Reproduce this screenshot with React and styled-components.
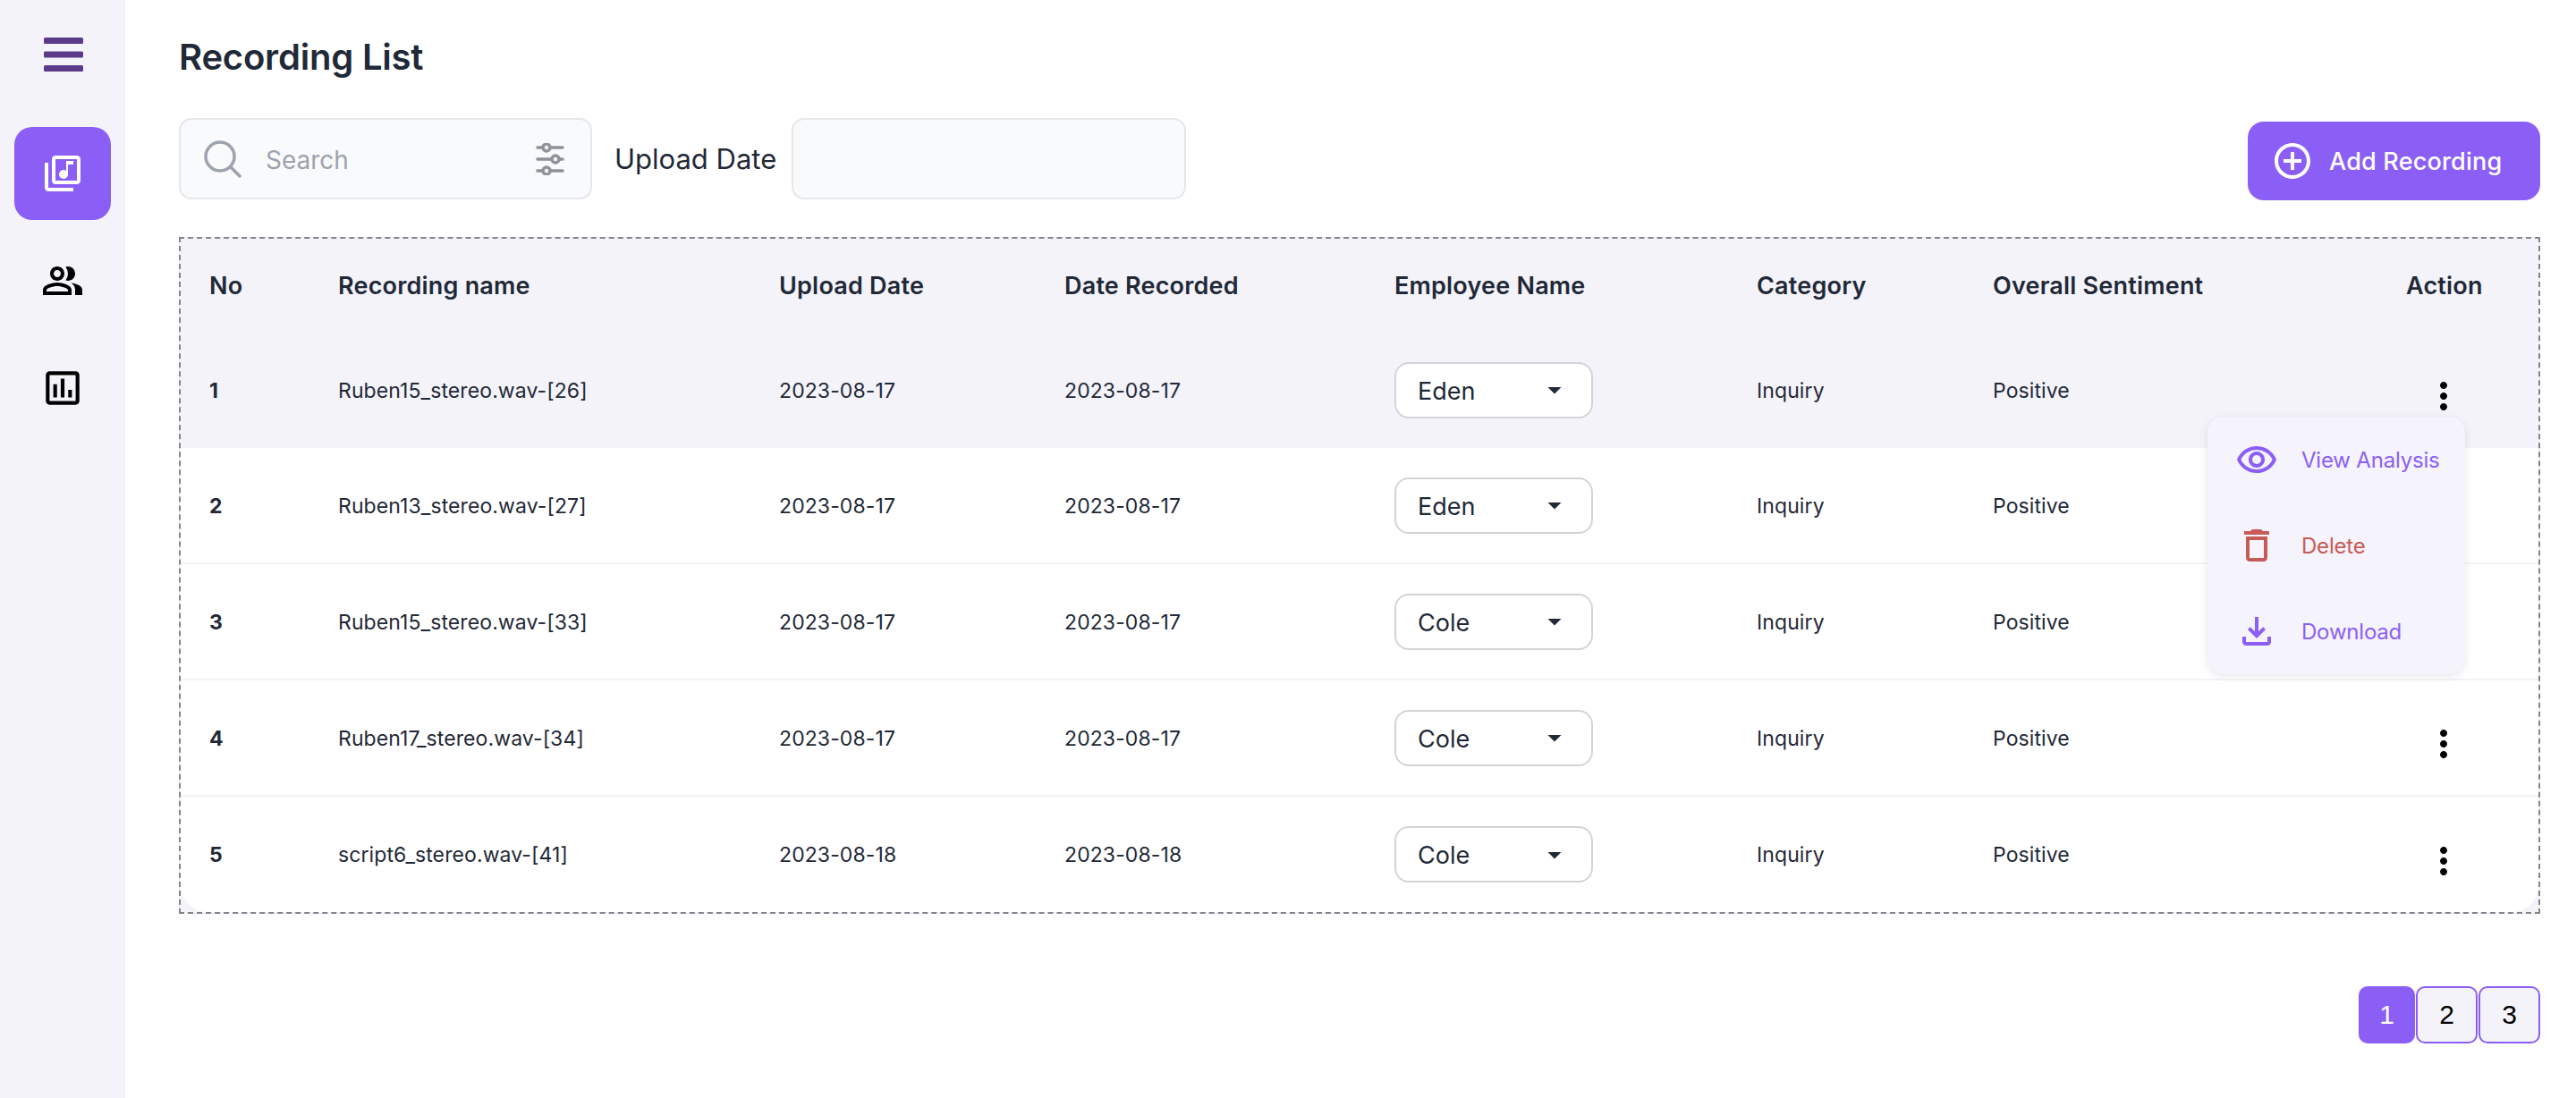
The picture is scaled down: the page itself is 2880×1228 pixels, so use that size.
import React from "react";
import styled, { createGlobalStyle } from "styled-components";
import {
  MdOutlineLibraryMusic,
  MdOutlinePeopleAlt,
  MdOutlineAssessment,
  MdOutlineAddCircleOutline,
  MdMoreVert,
  MdArrowDropDown,
  MdOutlineRemoveRedEye,
  MdOutlineDelete,
  MdOutlineFileDownload,
} from "react-icons/md";

const GlobalStyle = createGlobalStyle`
  body {
    margin: 0;
    background: #fff;
    font-family: Inter, "Liberation Sans", sans-serif;
    color: #1f2937;
  }
`;

const Shell = styled.div`
  display: flex;
  height: 100vh;
  overflow: hidden;
`;

const Sidebar = styled.aside`
  width: 140px;
  flex: none;
  background: #f4f3fa;
  display: flex;
  flex-direction: column;
  align-items: center;
  padding-top: 42px;
  box-sizing: border-box;
`;

const MenuIcon = styled.svg`
  display: block;
  width: 44px;
  height: 38px;
  margin: 0 0 62px 2px;
`;

const NavItem = styled.div`
  width: 108px;
  height: 104px;
  border-radius: 20px;
  display: flex;
  align-items: center;
  justify-content: center;
  margin-bottom: 16px;
  font-size: ${(p) => p.$size || "48px"};
  background: ${(p) => (p.$active ? "#8b5ff6" : "transparent")};
  color: ${(p) => (p.$active ? "#fff" : "#000")};
`;

const Main = styled.main`
  flex: 1;
  min-width: 0;
  padding: 40px 40px 0 60px;
`;

const Title = styled.h1`
  margin: 0;
  font-size: 40px;
  line-height: 48px;
  font-weight: 600;
  letter-spacing: -0.2px;
  color: #1f2937;
`;

const Toolbar = styled.div`
  display: flex;
  align-items: center;
  margin-top: 44px;
  height: 91px;
`;

const SearchBox = styled.div`
  width: 462px;
  height: 91px;
  box-sizing: border-box;
  border: 2px solid #e5e7eb;
  border-radius: 14px;
  background: #f9fafb;
  display: flex;
  align-items: center;
  padding: 0 29px 0 26px;
`;

const SearchInput = styled.input`
  flex: 1;
  min-width: 0;
  margin-left: 27px;
  padding: 2px 0 0;
  border: 0;
  outline: 0;
  background: transparent;
  font: 400 28px Inter, sans-serif;
  color: #1f2937;
  &::placeholder {
    color: #9ca3af;
  }
`;

const DateLabel = styled.label`
  margin: 0 17px 0 25px;
  font-size: 31px;
  color: #1f2937;
`;

const DateInput = styled.input`
  width: 441px;
  height: 91px;
  box-sizing: border-box;
  border: 2px solid #e5e7eb;
  border-radius: 14px;
  background: #f9fafb;
  outline: 0;
`;

const AddButton = styled.button`
  margin: 5px 0 0 auto;
  width: 327px;
  height: 88px;
  border: 0;
  border-radius: 18px;
  background: #8b5ff6;
  color: #fff;
  display: flex;
  align-items: center;
  gap: 17px;
  padding: 0 0 0 26px;
  font: 500 27px Inter, sans-serif;
  letter-spacing: 0.2px;
  svg {
    font-size: 48px;
    flex: none;
  }
`;

const TableBox = styled.div`
  margin-top: 42px;
  border: 2px dashed #85828a;
  background: #f4f3fa;
`;

const Row = styled.div`
  display: grid;
  grid-template-columns: 144px 493px 319px 369px 405px 264px 462px 84px;
  padding-left: 32px;
  align-items: center;
  box-sizing: border-box;
  height: ${(p) => (p.$head ? "104px" : p.$last ? "129px" : "130px")};
  background: ${(p) => (p.$head || p.$tinted ? "#f4f3fa" : "#fff")};
  border-bottom: ${(p) => (p.$head || p.$tinted || p.$last ? "0" : "2px solid #f3f3f5")};
  border-radius: ${(p) => (p.$last ? "0 0 30px 30px" : "0")};
`;

const HeadCell = styled.div`
  font-size: 27px;
  font-weight: 600;
  letter-spacing: 0.2px;
  white-space: nowrap;
  color: #1f2937;
  text-align: ${(p) => (p.$center ? "center" : "left")};
`;

const Cell = styled.div`
  font-size: 23px;
  letter-spacing: 0.1px;
  padding-top: 1px;
  white-space: nowrap;
  color: #1f2937;
`;

const NumCell = styled(Cell)`
  font-weight: 700;
`;

const Select = styled.div`
  width: 222px;
  height: 63px;
  box-sizing: border-box;
  border: 2px solid #d4d4d8;
  border-radius: 16px;
  background: #fff;
  display: flex;
  align-items: center;
  justify-content: space-between;
  padding: 2px 23px 0 24px;
  font-size: 27px;
  color: #1f2937;
  svg {
    font-size: 36px;
    margin-top: -2px;
  }
`;

const ActionCell = styled.div`
  position: relative;
  display: flex;
  justify-content: center;
  padding-top: 14px;
  font-size: 48px;
  color: #000;
`;

const Popup = styled.div`
  position: absolute;
  z-index: 2;
  top: 61px;
  right: 18px;
  width: 288px;
  height: 288px;
  box-sizing: border-box;
  border-radius: 18px;
  background: #f5f3fb;
  box-shadow: 0 2px 8px rgba(60, 50, 90, 0.12);
  display: flex;
  flex-direction: column;
  justify-content: center;
`;

const PopupItem = styled.div`
  height: 96px;
  display: grid;
  grid-template-columns: 105px 1fr;
  align-items: center;
  font-size: 24px;
  letter-spacing: -0.2px;
  color: ${(p) => p.$color};
  svg {
    font-size: 48px;
    justify-self: center;
    margin-left: 5px;
  }
`;

const Pagination = styled.div`
  display: flex;
  justify-content: flex-end;
  gap: 1px;
  margin-top: 81px;
`;

const PageButton = styled.button`
  width: ${(p) => (p.$active ? "63px" : "69px")};
  height: 64px;
  box-sizing: border-box;
  padding: 0;
  border-radius: 10px;
  border: ${(p) => (p.$active ? "0" : "2px solid #8b5ff6")};
  background: ${(p) => (p.$active ? "#8b5ff6" : "#f4f3fa")};
  color: ${(p) => (p.$active ? "#fff" : "#000")};
  font: 400 30px "Liberation Sans", Arial, sans-serif;
`;

const rows = [
  { no: 1, name: "Ruben15_stereo.wav-[26]", date: "2023-08-17", emp: "Eden" },
  { no: 2, name: "Ruben13_stereo.wav-[27]", date: "2023-08-17", emp: "Eden" },
  { no: 3, name: "Ruben15_stereo.wav-[33]", date: "2023-08-17", emp: "Cole" },
  { no: 4, name: "Ruben17_stereo.wav-[34]", date: "2023-08-17", emp: "Cole" },
  { no: 5, name: "script6_stereo.wav-[41]", date: "2023-08-18", emp: "Cole" },
];

const heads = ["No", "Recording name", "Upload Date", "Date Recorded", "Employee Name", "Category", "Overall Sentiment"];

const App = () => {
  return (
    <Shell>
      <GlobalStyle />
      <Sidebar>
        <MenuIcon viewBox="0 0 44 38" fill="#5b3a8a">
          <rect x="0" y="0" width="44" height="7" rx="1.5" />
          <rect x="0" y="15.5" width="44" height="7" rx="1.5" />
          <rect x="0" y="31" width="44" height="7" rx="1.5" />
        </MenuIcon>
        <NavItem $active>
          <MdOutlineLibraryMusic />
        </NavItem>
        <NavItem>
          <MdOutlinePeopleAlt />
        </NavItem>
        <NavItem $size="50px">
          <MdOutlineAssessment />
        </NavItem>
      </Sidebar>
      <Main>
        <Title>Recording List</Title>
        <Toolbar>
          <SearchBox>
            <svg width="42" height="42" viewBox="0 0 42 42" fill="none" stroke="#9ca3af" strokeWidth="3.5" strokeLinecap="round">
              <circle cx="18" cy="18" r="16" />
              <path d="M30 30 L40 40" />
            </svg>
            <SearchInput placeholder="Search" />
            <svg width="32" height="36" viewBox="0 0 32 36" fill="none" stroke="#8e929b" strokeWidth="3.5" strokeLinecap="round">
              <path d="M2 5h5M17 5h13M2 18h15M27 18h3M2 31h5M17 31h13" />
              <circle cx="12" cy="5" r="4" />
              <circle cx="22" cy="18" r="4" />
              <circle cx="12" cy="31" r="4" />
            </svg>
          </SearchBox>
          <DateLabel>Upload Date</DateLabel>
          <DateInput />
          <AddButton>
            <MdOutlineAddCircleOutline />
            Add Recording
          </AddButton>
        </Toolbar>
        <TableBox>
          <Row $head>
            {heads.map((h) => (
              <HeadCell key={h}>{h}</HeadCell>
            ))}
            <HeadCell $center>Action</HeadCell>
          </Row>
          {rows.map((r, i) => (
            <Row key={r.no} $tinted={i === 0} $last={i === rows.length - 1}>
              <NumCell>{r.no}</NumCell>
              <Cell>{r.name}</Cell>
              <Cell>{r.date}</Cell>
              <Cell>{r.date}</Cell>
              <Select>
                {r.emp}
                <MdArrowDropDown />
              </Select>
              <Cell>Inquiry</Cell>
              <Cell>Positive</Cell>
              <ActionCell>
                <MdMoreVert />
                {i === 0 && (
                  <Popup>
                    <PopupItem $color="#8b5ff6">
                      <MdOutlineRemoveRedEye />
                      View Analysis
                    </PopupItem>
                    <PopupItem $color="#c75b56">
                      <MdOutlineDelete />
                      Delete
                    </PopupItem>
                    <PopupItem $color="#8b5ff6">
                      <MdOutlineFileDownload />
                      Download
                    </PopupItem>
                  </Popup>
                )}
              </ActionCell>
            </Row>
          ))}
        </TableBox>
        <Pagination>
          <PageButton $active>1</PageButton>
          <PageButton>2</PageButton>
          <PageButton>3</PageButton>
        </Pagination>
      </Main>
    </Shell>
  );
};

export default App;
